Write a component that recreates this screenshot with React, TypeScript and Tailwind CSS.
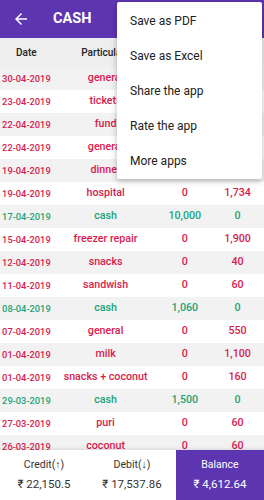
import React from "react";

type Row = { d: string; p: string; c: string; b: string; g?: boolean };

const rows: Row[] = [
  { d: "30-04-2019", p: "general", c: "0", b: "120" },
  { d: "23-04-2019", p: "tickets", c: "0", b: "300" },
  { d: "22-04-2019", p: "fund", c: "0", b: "500" },
  { d: "22-04-2019", p: "general", c: "0", b: "80" },
  { d: "19-04-2019", p: "dinner", c: "0", b: "450" },
  { d: "19-04-2019", p: "hospital", c: "0", b: "1,734" },
  { d: "17-04-2019", p: "cash", c: "10,000", b: "0", g: true },
  { d: "15-04-2019", p: "freezer repair", c: "0", b: "1,900" },
  { d: "12-04-2019", p: "snacks", c: "0", b: "40" },
  { d: "11-04-2019", p: "sandwish", c: "0", b: "60" },
  { d: "08-04-2019", p: "cash", c: "1,060", b: "0", g: true },
  { d: "07-04-2019", p: "general", c: "0", b: "550" },
  { d: "01-04-2019", p: "milk", c: "0", b: "1,100" },
  { d: "01-04-2019", p: "snacks + coconut", c: "0", b: "160" },
  { d: "29-03-2019", p: "cash", c: "1,500", b: "0", g: true },
  { d: "27-03-2019", p: "puri", c: "0", b: "60" },
  { d: "26-03-2019", p: "coconut", c: "0", b: "60" },
];

const menu = ["Save as PDF", "Save as Excel", "Share the app", "Rate the app", "More apps"];

export default function App() {
  return (
    <div className="relative w-[264px] h-[500px] overflow-hidden bg-white flex flex-col font-['Roboto',sans-serif]">
      <div className="h-[38px] shrink-0 bg-[#5e35b1] flex items-center pl-[12px]">
        <svg width="18" height="18" viewBox="0 0 24 24" fill="white">
          <path d="M20 11H7.83l5.59-5.59L12 4l-8 8 8 8 1.41-1.41L7.83 13H20v-2z" />
        </svg>
        <span className="ml-[23px] text-white font-bold text-[14.5px] leading-none">CASH</span>
      </div>
      <div className="grid grid-cols-[1fr_2fr_1fr_1fr] h-[29px] shrink-0 bg-[#eeeeee] items-center text-center text-[10px] font-medium text-[#222]">
        <div>Date</div>
        <div>Particulars</div>
        <div>Credit</div>
        <div>Debit</div>
      </div>
      <div className="flex-1 overflow-hidden">
        {rows.map((r, i) => (
          <div
            key={i}
            className={`grid grid-cols-[1fr_2fr_1fr_1fr] h-[23px] items-center text-center font-medium ${
              i % 2 === 0 ? "bg-[#f2f2f2]" : "bg-white"
            } ${r.g ? "text-[#1aa37a]" : "text-[#d81b4f]"}`}
          >
            <div className="text-[9.3px] whitespace-nowrap">{r.d}</div>
            <div className="text-[10.7px] whitespace-nowrap">{r.p}</div>
            <div className="text-[10.7px]">{r.c}</div>
            <div className="text-[10.7px]">{r.b}</div>
          </div>
        ))}
      </div>
      <div className="h-[50px] shrink-0 grid grid-cols-3 bg-white shadow-[0_-1px_3px_rgba(0,0,0,0.12)] relative">
        <div className="flex flex-col items-center justify-center gap-[8px] text-[#333]">
          <div className="text-[10.5px] leading-none">Credit(↑)</div>
          <div className="text-[11.5px] leading-none">₹ 22,150.5</div>
        </div>
        <div className="flex flex-col items-center justify-center gap-[8px] text-[#333]">
          <div className="text-[10.5px] leading-none">Debit(↓)</div>
          <div className="text-[11.5px] leading-none">₹ 17,537.86</div>
        </div>
        <div className="flex flex-col items-center justify-center gap-[8px] bg-[#5e35b1] text-white">
          <div className="text-[10.5px] leading-none">Balance</div>
          <div className="text-[11.5px] leading-none">₹ 4,612.64</div>
        </div>
      </div>
      <div className="absolute top-[2px] left-[117px] w-[145px] bg-white rounded-[2px] shadow-[0_2px_6px_rgba(0,0,0,0.28)] py-[1px]">
        {menu.map((m) => (
          <div key={m} className="h-[35px] flex items-center pl-[13px] text-[12px] text-[#212121]">
            {m}
          </div>
        ))}
      </div>
    </div>
  );
}
